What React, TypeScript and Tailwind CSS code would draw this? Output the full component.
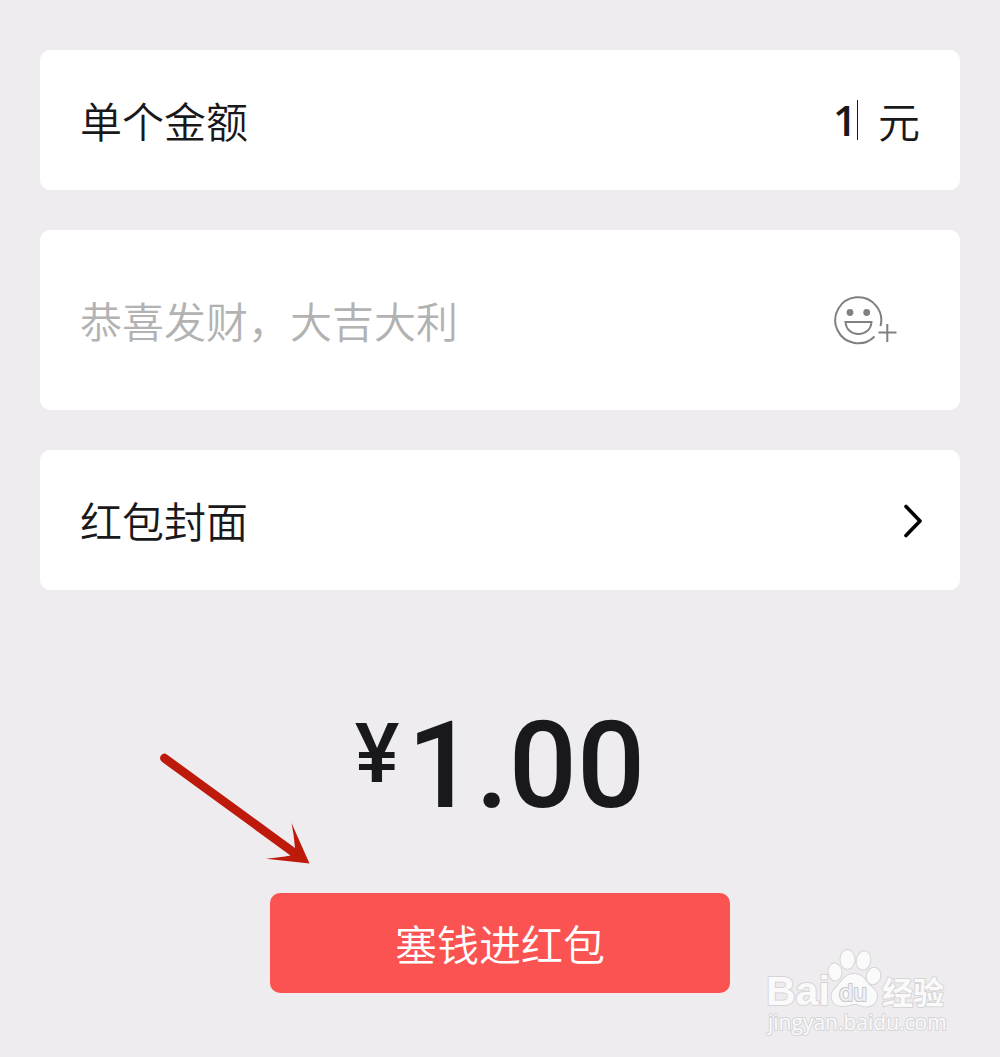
import React from "react"

const SmileyPlusIcon: React.FC<React.SVGProps<SVGSVGElement>> = (props) => (
  <svg {...props} viewBox="0 0 64 50" fill="none" stroke="#808080" strokeWidth={2}>
    <path d="M40.5 41.5A23 23 0 1 1 46.5 31" />
    <circle cx="16" cy="17.5" r="3.4" fill="#808080" stroke="none" />
    <circle cx="32.7" cy="17.5" r="3.4" fill="#808080" stroke="none" />
    <path d="M11.5 27H37.5C37 34.5 31.5 39 24.5 39S12 34.5 11.5 27Z" />
    <path d="M44.5 37.5H62.5M53.3 29V47" />
  </svg>
)

const ChevronRightIcon: React.FC<React.SVGProps<SVGSVGElement>> = (props) => (
  <svg {...props} viewBox="0 0 20 36" fill="none" stroke="#000000" strokeWidth={3.6}>
    <path strokeLinecap="round" strokeLinejoin="round" d="M4 4.5L18 19L4 33.500" />
  </svg>
)

const PointerArrow: React.FC<React.SVGProps<SVGSVGElement>> = (props) => (
  <svg {...props} viewBox="0 0 150 112" fill="#bd1a0c">
    <path d="M6.5 1.2Q4.5 0 2.3 1.2Q0 3 0 5Q0 7.5 2.2 9L130.5 102.5Q120 104.5 106 105.7L149.5 110.5L131.5 70Q134 82 135 95Z" />
  </svg>
)

const BaiduLogo: React.FC<React.SVGProps<SVGSVGElement>> = (props) => (
  <svg
    {...props}
    viewBox="0 0 220 115"
    fill="#fafafa"
    stroke="#d6d4d7"
    strokeWidth={2}
    paintOrder="stroke"
    strokeLinejoin="round"
  >
    <text x="16" y="70" fontFamily="'Liberation Sans', sans-serif" fontSize="41" fontWeight="700">
      Bai
    </text>
    <ellipse cx="85" cy="37" rx="6.5" ry="8.5" transform="rotate(-8 85 37)" />
    <ellipse cx="97.5" cy="24.5" rx="7" ry="9.5" />
    <ellipse cx="113.5" cy="25.5" rx="6.8" ry="9.3" transform="rotate(12 113.5 25.5)" />
    <ellipse cx="123.5" cy="41" rx="6.8" ry="8.3" transform="rotate(14 123.5 41)" />
    <path d="M103 39C97 39 94 43 90 48C86 53 81 56 81.5 62C82 68 87 71.5 94 71C99 70.5 101 69 105 69C109 69 111 71.5 116 71.5C122 71.5 127 68 127 61C127 54 120 52 117 47C113 41 109 39 103 39Z" />
    <text x="89" y="66" fontFamily="Inter, sans-serif" fontSize="23" fontWeight="500" fill="#f1f0f2" stroke="#c8c6c9">
      du
    </text>
    <text x="132" y="69" fontFamily="'Noto Sans CJK SC', sans-serif" fontSize="31" fontWeight="700">
      经验
    </text>
    <text x="18" y="95" fontFamily="'Open Sans', sans-serif" fontSize="21" fontWeight="400">
      jingyan.baidu.com
    </text>
  </svg>
)

const App: React.FC = () => {
  const [amount, setAmount] = React.useState("1")
  const [wish, setWish] = React.useState("")

  return (
    <main className="relative min-h-screen bg-[#eeecef] px-10 pt-[50px] pb-16 font-['Noto_Sans_CJK_SC',sans-serif] text-[42px] leading-[60px] font-[350] text-[#19181b]">
      <form className="flex flex-col gap-10" onSubmit={(e) => e.preventDefault()}>
        <div className="flex h-[140px] items-center rounded-[10px] bg-white px-10">
          <label htmlFor="amount">单个金额</label>
          <input
            id="amount"
            inputMode="decimal"
            value={amount}
            onChange={(e) => setAmount(e.target.value)}
            className="ml-auto w-40 bg-transparent text-right font-['Open_Sans',sans-serif] font-semibold caret-[#19181b] outline-none"
          />
          <span className="mr-5 h-10 w-px bg-[#19181b]" />
          <span>元</span>
        </div>

        <div className="flex h-[180px] items-center rounded-[10px] bg-white pr-[38px] pl-10">
          <input
            aria-label="祝福语"
            placeholder="恭喜发财，大吉大利"
            value={wish}
            onChange={(e) => setWish(e.target.value)}
            className="min-w-0 flex-1 bg-transparent outline-none placeholder:text-[#b2b2b2]"
          />
          <button type="button" aria-label="表情" className="mr-6">
            <SmileyPlusIcon className="h-[50px] w-16" />
          </button>
        </div>

        <button
          type="button"
          className="flex h-[140px] items-center justify-between rounded-[10px] bg-white pr-[38px] pl-10"
        >
          <span>红包封面</span>
          <ChevronRightIcon className="h-9 w-5" />
        </button>

        <div className="mt-[70px] flex justify-center gap-2 font-['Roboto',sans-serif] font-medium">
          <span className="text-[84px] leading-[108px]">¥</span>
          <span className="text-[120px] leading-[132px]">1.00</span>
        </div>

        <div className="relative mx-auto mt-[21px] w-[460px] max-w-full">
          <PointerArrow className="pointer-events-none absolute -top-[140px] -left-[110px] h-28 w-[150px]" />
          <button type="submit" className="h-[100px] w-full rounded-[10px] bg-[#fb5351] text-white">
            塞钱进红包
          </button>
        </div>
      </form>

      <BaiduLogo className="absolute right-[30px] bottom-[7px] h-[115px] w-[220px]" />
    </main>
  )
}

export default App
